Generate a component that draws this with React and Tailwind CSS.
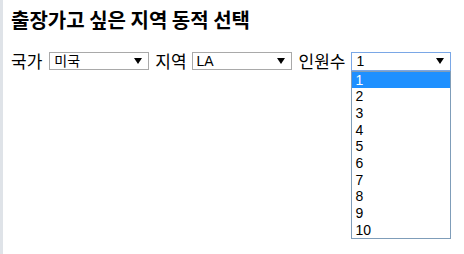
import React from 'react'

const Arrow = () => (
  <svg width="8" height="6" viewBox="0 0 8 6" className="shrink-0">
    <path d="M0 0 H8 L4 6 Z" fill="#000" />
  </svg>
)

const FakeSelect = ({ value, focused, children }) => (
  <div className="relative">
    <div
      className={`w-[100px] flex items-center justify-between pl-[4px] pr-[6px] bg-white text-[14px] text-black ${
        focused ? 'h-[19px] border border-[#7aa7e6]' : 'h-[18px] border border-[#a9a9a9]'
      }`}
      style={{ fontFamily: '"Liberation Sans", "Noto Sans CJK KR", sans-serif' }}
    >
      <span className="leading-none">{value}</span>
      <Arrow />
    </div>
    {children}
  </div>
)

const counts = ['1', '2', '3', '4', '5', '6', '7', '8', '9', '10']

export default function App() {
  return (
    <div
      className="flex min-h-[254px] bg-white text-black"
      style={{ fontFamily: '"Noto Sans CJK KR", "Noto Sans", sans-serif' }}
    >
      <div className="w-[3px] bg-[#dfe3e8] shrink-0" />
      <div className="pl-[8px] pt-[6px]">
        <h3 className="text-[20px] leading-[28px] font-bold">출장가고 싶은 지역 동적 선택</h3>
        <div className="flex items-center mt-[17px] text-[17px] leading-[20px]">
          <span>국가</span>
          <div className="ml-[7px]">
            <FakeSelect value="미국" />
          </div>
          <span className="ml-[6px]">지역</span>
          <div className="ml-[5px]">
            <FakeSelect value="LA" />
          </div>
          <span className="ml-[7px]">인원수</span>
          <div className="ml-[6px]">
            <FakeSelect value="1" focused>
              <ul
                className="absolute left-0 top-full w-[100px] bg-white border border-[#7f9db9] text-[14px] z-10"
                style={{ fontFamily: '"Liberation Sans", sans-serif' }}
              >
                {counts.map((c) => (
                  <li
                    key={c}
                    className={`h-[16.7px] leading-[16.7px] pl-[3px] ${
                      c === '1' ? 'bg-[#1e90ff] text-white' : 'text-black'
                    }`}
                  >
                    {c}
                  </li>
                ))}
              </ul>
            </FakeSelect>
          </div>
        </div>
      </div>
    </div>
  )
}
